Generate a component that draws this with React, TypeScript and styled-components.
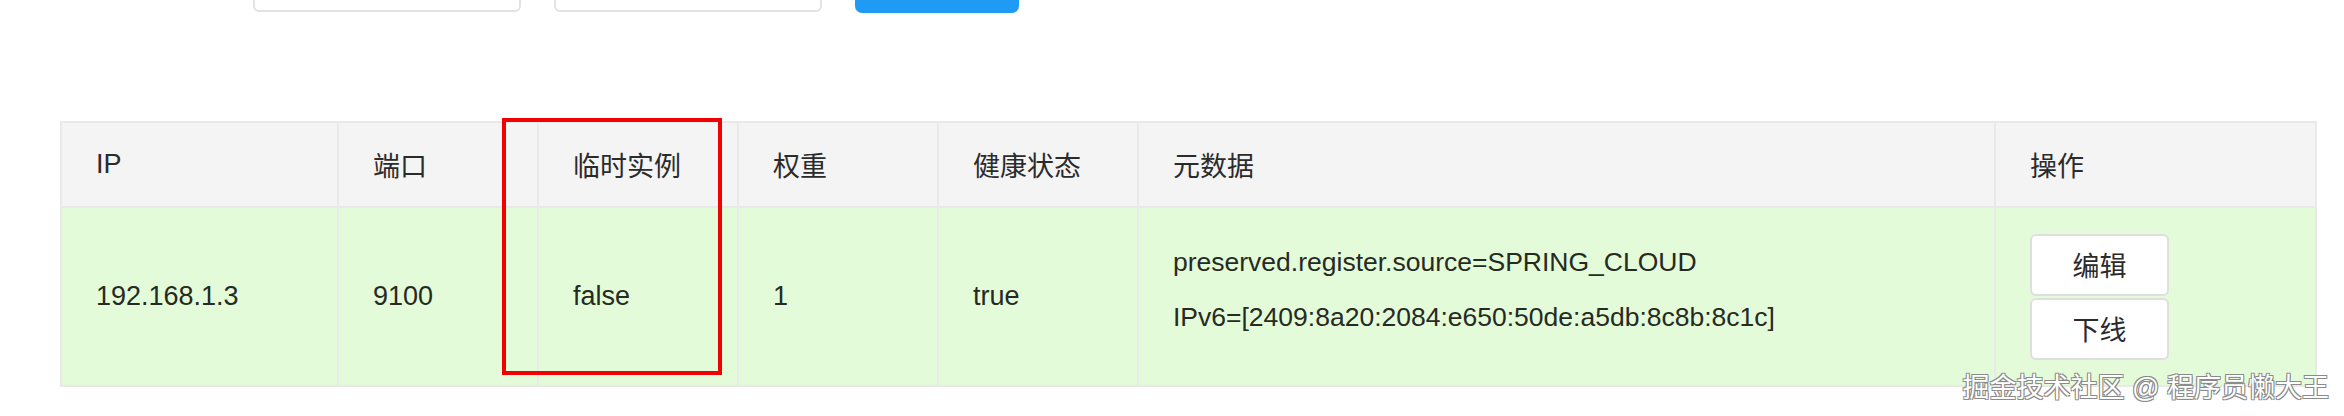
import React from "react";
import styled, { createGlobalStyle } from "styled-components";

const GlobalStyle = createGlobalStyle`
  html, body {
    margin: 0;
    padding: 0;
    background: #ffffff;
  }
  body {
    font-family: "Liberation Sans", "Noto Sans CJK SC", sans-serif;
    color: #2b2b2b;
  }
`;

const columns = [277, 200, 200, 200, 200, 857, 321];
const headers = ["IP", "端口", "临时实例", "权重", "健康状态", "元数据", "操作"];

function App() {
  return (
    <Page>
      <GlobalStyle />
      <Toolbar>
        <SearchInput placeholder="" />
        <SearchInput placeholder="" />
        <QueryButton />
      </Toolbar>

      <TableWrap>
        <Table>
          <colgroup>
            {columns.map((w, i) => (
              <col key={i} style={{ width: w }} />
            ))}
          </colgroup>
          <thead>
            <tr>
              {headers.map((h) => (
                <HeadCell key={h}>{h}</HeadCell>
              ))}
            </tr>
          </thead>
          <tbody>
            <BodyRow>
              <Cell>192.168.1.3</Cell>
              <Cell>9100</Cell>
              <Cell>false</Cell>
              <Cell>1</Cell>
              <Cell>true</Cell>
              <Cell>
                <Meta>
                  <div>preserved.register.source=SPRING_CLOUD</div>
                  <div>IPv6=[2409:8a20:2084:e650:50de:a5db:8c8b:8c1c]</div>
                </Meta>
              </Cell>
              <Cell>
                <Actions>
                  <ActionButton>编辑</ActionButton>
                  <ActionButton>下线</ActionButton>
                </Actions>
              </Cell>
            </BodyRow>
          </tbody>
        </Table>
        <Highlight />
      </TableWrap>

      <Watermark>掘金技术社区 @ 程序员懒大王</Watermark>
    </Page>
  );
}

const Page = styled.div`
  position: relative;
  width: 2344px;
  height: 416px;
  overflow: hidden;
  background: #ffffff;
`;

//? toolbar, only its bottom edge shows
const Toolbar = styled.div`
  display: flex;
  align-items: flex-end;
  gap: 33px;
  height: 13px;
  padding-left: 253px;
  overflow: hidden;
`;

const SearchInput = styled.input`
  box-sizing: border-box;
  width: 268px;
  height: 48px;
  margin-bottom: 1px;
  border: 2px solid #e2e2e2;
  border-radius: 6px;
  background: #ffffff;
  outline: none;
`;

const QueryButton = styled.div`
  width: 164px;
  height: 48px;
  border-radius: 7px;
  background: #1f9bf6;
`;

//? table
const TableWrap = styled.div`
  position: relative;
  margin-top: 108px;
  margin-left: 60px;
  width: 2255px;
`;

const Table = styled.table`
  width: 2255px;
  table-layout: fixed;
  border-collapse: collapse;
  border: 2px solid #e9e9e9;
  font-size: 27px;
`;

const HeadCell = styled.th`
  height: 83px;
  padding: 0 0 0 34px;
  text-align: left;
  font-weight: normal;
  color: #2b2b2b;
  background: #f4f4f4;
  border: 2px solid #e9e9e9;
`;

const BodyRow = styled.tr`
  background: #e4fbd9;
`;

const Cell = styled.td`
  height: 177px;
  padding: 0 0 0 34px;
  color: #262a23;
  border: 2px solid #e9e9e9;
  vertical-align: middle;
`;

const Meta = styled.div`
  font-size: 26.5px;
  line-height: 55px;
  padding-bottom: 14px;
`;

const Actions = styled.div`
  display: flex;
  flex-direction: column;
  gap: 2px;
  width: 139px;
`;

const ActionButton = styled.button`
  box-sizing: border-box;
  height: 62px;
  border: 2px solid #dedede;
  border-radius: 6px;
  background: #ffffff;
  color: #2b2b2b;
  font-family: "Liberation Sans", "Noto Sans CJK SC", sans-serif;
  font-size: 27px;
  padding: 0;
`;

//? annotation drawn over the screenshot
const Highlight = styled.div`
  position: absolute;
  left: 442px;
  top: -3px;
  width: 220px;
  height: 257px;
  box-sizing: border-box;
  border: 4px solid #f00000;
  pointer-events: none;
`;

const Watermark = styled.div`
  position: absolute;
  right: 15px;
  bottom: 14px;
  font-size: 27px;
  line-height: 28px;
  color: #ffffff;
  text-shadow: 1px 1px 0 #8a8a8a, -1px -1px 0 #8a8a8a, 1px -1px 0 #8a8a8a,
    -1px 1px 0 #8a8a8a;
`;

export default App;
